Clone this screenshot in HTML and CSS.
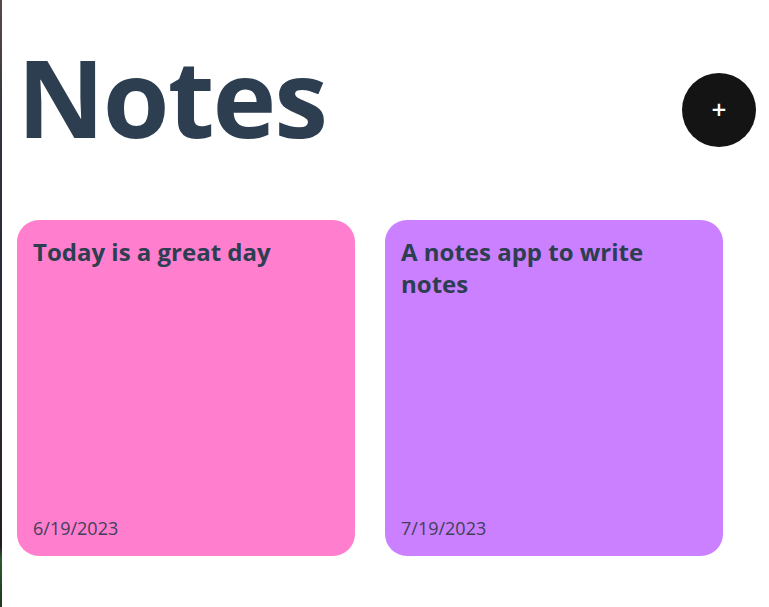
FILE: index.html
```html
<!DOCTYPE html>
<html>
<head>
<meta charset="utf-8">
<link rel="stylesheet" href="styles.css">
</head>
<body>
<div class="edge"></div>
<div class="app">
  <header class="header">
    <h1 class="title">Notes</h1>
    <button class="add-btn">+</button>
  </header>
  <main class="notes">
    <div class="note pink">
      <h2 class="note-title">Today is a great day</h2>
      <span class="note-date">6/19/2023</span>
    </div>
    <div class="note purple">
      <h2 class="note-title">A notes app to write notes</h2>
      <span class="note-date">7/19/2023</span>
    </div>
  </main>
</div>
</body>
</html>
```
FILE: styles.css
```css
* { box-sizing: border-box; }
html, body { margin: 0; padding: 0; background: #fff; }
body {
  font-family: "Open Sans", "Noto Sans", sans-serif;
  color: #2c3e50;
  position: relative;
  min-height: 607px;
}
.edge {
  position: absolute;
  left: 0; top: 0; bottom: 0;
  width: 2px;
  background: linear-gradient(#5a4a48 0%, #33333f 20%, #262a3a 45%, #2e2430 70%, #241c22 90%, #2f5a2f 92%, #1f3a20 100%);
}
.app {
  padding: 0 13px 0 17px;
}
.header {
  display: flex;
  justify-content: space-between;
  align-items: flex-start;
  padding-top: 43px;
  height: 220px;
}
.title {
  margin: 0;
  font-size: 108px;
  font-weight: 700;
  line-height: 1;
  letter-spacing: -2px;
}
.add-btn {
  width: 74px;
  height: 74px;
  border-radius: 50%;
  border: none;
  background: #141414;
  color: #fff;
  font-family: "Open Sans", sans-serif;
  font-size: 26px;
  font-weight: 600;
  line-height: 1;
  padding: 0 0 3px;
  margin-top: 30px;
}
.notes {
  display: flex;
  gap: 30px;
}
.note {
  width: 338px;
  height: 336px;
  border-radius: 22px;
  padding: 16px 16px 16px;
  display: flex;
  flex-direction: column;
  justify-content: space-between;
}
.pink { background: #ff7ecd; }
.purple { background: #cb80ff; }
.note-title {
  margin: 0;
  font-size: 24px;
  font-weight: 700;
  line-height: 32px;
}
.note-date {
  font-size: 18px;
  color: #40405a;
}
```
